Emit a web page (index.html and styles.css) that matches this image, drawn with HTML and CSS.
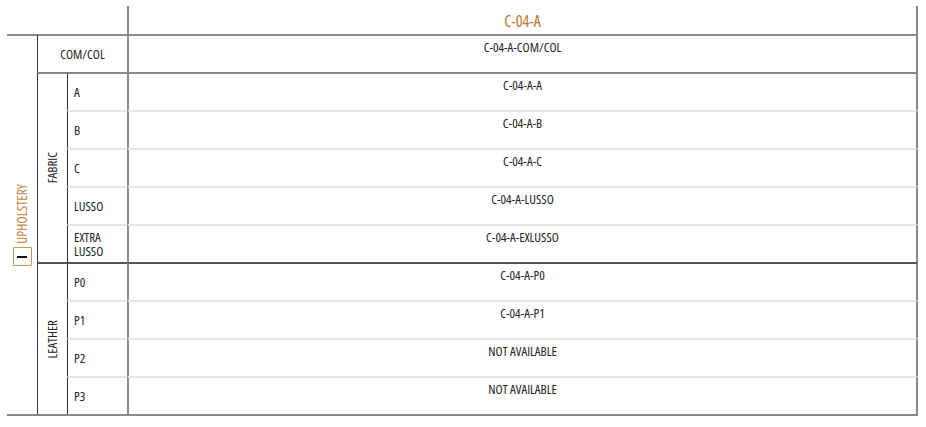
FILE: index.html
```html
<!DOCTYPE html>
<html>
<head>
<meta charset="utf-8">
<link rel="stylesheet" href="styles.css">
</head>
<body>
<div class="table">
  <div class="corner"></div>
  <div class="head">C-04-A</div>

  <div class="group">
    <span class="vtext orange">UPHOLSTERY</span>
    <span class="toggle"><span class="minus"></span></span>
  </div>

  <div class="comcol">COM/COL</div>
  <div class="val top-grey">C-04-A-COM/COL</div>

  <div class="sub fabric"><span class="vtext">FABRIC</span></div>
  <div class="opt top-grey">A</div>
  <div class="val top-grey">C-04-A-A</div>
  <div class="opt top-light">B</div>
  <div class="val top-light">C-04-A-B</div>
  <div class="opt top-light">C</div>
  <div class="val top-light">C-04-A-C</div>
  <div class="opt top-light">LUSSO</div>
  <div class="val top-light">C-04-A-LUSSO</div>
  <div class="opt top-light"><span class="two">EXTRA<br>LUSSO</span></div>
  <div class="val top-light">C-04-A-EXLUSSO</div>

  <div class="sub leather"><span class="vtext">LEATHER</span></div>
  <div class="opt top-dark">P0</div>
  <div class="val top-dark">C-04-A-P0</div>
  <div class="opt top-light">P1</div>
  <div class="val top-light">C-04-A-P1</div>
  <div class="opt top-light">P2</div>
  <div class="val top-light">NOT AVAILABLE</div>
  <div class="opt top-light">P3</div>
  <div class="val top-light">NOT AVAILABLE</div>
</div>
</body>
</html>
```

FILE: styles.css
```css
html, body {
  margin: 0;
  padding: 0;
  background: #ffffff;
}

body {
  font-family: "Open Sans", "DejaVu Sans", sans-serif;
  font-stretch: 75%;
  font-weight: 500;
  font-size: 13px;
  color: #222222;
}

.table {
  margin: 6px 0 0 7px;
  width: 911px;
  display: grid;
  grid-template-columns: 30px 30px 60px 1fr;
  grid-template-rows: 28px repeat(10, 38px);
  border-bottom: 2px solid #8a8a8a;
}

.table > div {
  box-sizing: border-box;
}

.corner {
  grid-column: 1 / 4;
  grid-row: 1;
}

.head {
  grid-column: 4;
  grid-row: 1;
  border-left: 2px solid #8a8a8a;
  border-right: 2px solid #8a8a8a;
  display: flex;
  align-items: center;
  justify-content: center;
  color: #b8752f;
  font-size: 16px;
  font-weight: 400;
  padding-top: 1px;
}

.group {
  grid-column: 1;
  grid-row: 2 / 12;
  border-top: 2px solid #8a8a8a;
  display: flex;
  flex-direction: column;
  align-items: center;
  justify-content: center;
  gap: 4px;
}

.vtext {
  writing-mode: vertical-rl;
  transform: rotate(180deg);
  line-height: 15px;
}

.orange {
  color: #c0843f;
  font-weight: 400;
  font-size: 13.5px;
}

.toggle {
  width: 19px;
  height: 19px;
  box-sizing: border-box;
  border: 1.5px solid #c89460;
  border-radius: 1px;
  display: flex;
  align-items: center;
  justify-content: center;
}

.minus {
  width: 10px;
  height: 2px;
  background: #111111;
}

.comcol {
  grid-column: 2 / 4;
  grid-row: 2;
  border-top: 2px solid #8a8a8a;
  border-left: 1px solid #333333;
  display: flex;
  align-items: center;
  justify-content: center;
}

.sub {
  grid-column: 2;
  border-left: 1px solid #333333;
  display: flex;
  align-items: center;
  justify-content: center;
}

.fabric {
  grid-row: 3 / 8;
  border-top: 2px solid #8a8a8a;
}

.leather {
  grid-row: 8 / 12;
  border-top: 2px solid #555555;
}

.opt {
  grid-column: 3;
  border-left: 1px solid #333333;
  display: flex;
  align-items: center;
  padding-left: 6px;
  line-height: 15px;
}

.two {
  line-height: 14px;
}

.val {
  grid-column: 4;
  border-left: 2px solid #8a8a8a;
  border-right: 2px solid #8a8a8a;
  text-align: center;
  padding-top: 2px;
}

.top-grey {
  border-top: 2px solid #8a8a8a;
}

.top-light {
  border-top: 2px solid #e6e6e6;
}

.top-dark {
  border-top: 2px solid #555555;
}
```
